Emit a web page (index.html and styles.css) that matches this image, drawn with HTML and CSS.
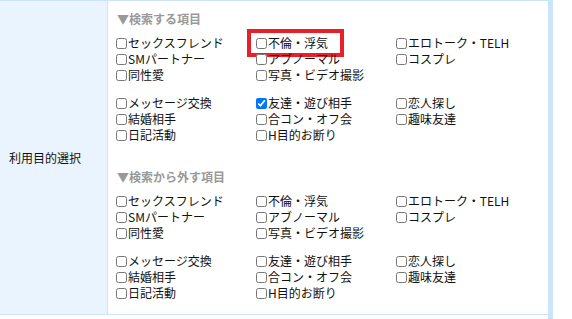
FILE: index.html
```html
<!DOCTYPE html>
<html lang="ja">
<head>
  <meta charset="UTF-8">
  <meta name="viewport" content="width=device-width, initial-scale=1.0">
  <title>利用目的選択</title>
  <link rel="stylesheet" href="styles.css">
</head>
<body>
  <div class="page">
    <table class="form-table">
      <tr>
        <th>利用目的選択</th>
        <td>
          <div class="section">
            <div class="section-title">▼検索する項目</div>
            <div class="check-grid">
              <label class="check"><input type="checkbox">セックスフレンド</label>
              <label class="check highlight"><input type="checkbox">不倫・浮気</label>
              <label class="check"><input type="checkbox">エロトーク・TELH</label>
              <label class="check"><input type="checkbox">SMパートナー</label>
              <label class="check"><input type="checkbox">アブノーマル</label>
              <label class="check"><input type="checkbox">コスプレ</label>
              <label class="check"><input type="checkbox">同性愛</label>
              <label class="check"><input type="checkbox">写真・ビデオ撮影</label>
            </div>
            <div class="check-grid">
              <label class="check"><input type="checkbox">メッセージ交換</label>
              <label class="check"><input type="checkbox" checked>友達・遊び相手</label>
              <label class="check"><input type="checkbox">恋人探し</label>
              <label class="check"><input type="checkbox">結婚相手</label>
              <label class="check"><input type="checkbox">合コン・オフ会</label>
              <label class="check"><input type="checkbox">趣味友達</label>
              <label class="check"><input type="checkbox">日記活動</label>
              <label class="check"><input type="checkbox">H目的お断り</label>
            </div>
          </div>

          <div class="section">
            <div class="section-title">▼検索から外す項目</div>
            <div class="check-grid">
              <label class="check"><input type="checkbox">セックスフレンド</label>
              <label class="check"><input type="checkbox">不倫・浮気</label>
              <label class="check"><input type="checkbox">エロトーク・TELH</label>
              <label class="check"><input type="checkbox">SMパートナー</label>
              <label class="check"><input type="checkbox">アブノーマル</label>
              <label class="check"><input type="checkbox">コスプレ</label>
              <label class="check"><input type="checkbox">同性愛</label>
              <label class="check"><input type="checkbox">写真・ビデオ撮影</label>
            </div>
            <div class="check-grid">
              <label class="check"><input type="checkbox">メッセージ交換</label>
              <label class="check"><input type="checkbox">友達・遊び相手</label>
              <label class="check"><input type="checkbox">恋人探し</label>
              <label class="check"><input type="checkbox">結婚相手</label>
              <label class="check"><input type="checkbox">合コン・オフ会</label>
              <label class="check"><input type="checkbox">趣味友達</label>
              <label class="check"><input type="checkbox">日記活動</label>
              <label class="check"><input type="checkbox">H目的お断り</label>
            </div>
          </div>
        </td>
      </tr>
    </table>
    <div class="side-bar"></div>
  </div>
</body>
</html>
```

FILE: styles.css
```css
body {
  margin: 0;
  padding: 0;
  font-family: "Noto Sans CJK JP", "Noto Sans", sans-serif;
  font-size: 12px;
  color: #111;
  background-color: #fff;
}

.page {
  display: flex;
  align-items: stretch;
  height: 319px;
  overflow: hidden;
}

.form-table {
  width: 548px;
  border-collapse: collapse;
  align-self: flex-start;
}

.form-table th,
.form-table td {
  border-top: 1px solid #cce3fa;
  border-bottom: 1px solid #cce3fa;
}

.form-table th {
  width: 98px;
  padding: 0 0 0 9px;
  background-color: #eaf4fe;
  border-right: 1px solid #cce3fa;
  font-weight: normal;
  text-align: left;
  vertical-align: middle;
}

.form-table td {
  padding: 10px 0 13px 8px;
}

.side-bar {
  width: 5px;
  background-color: #cbe3fb;
}

.section + .section {
  margin-top: 26px;
}

.section-title {
  height: 16px;
  line-height: 16px;
  padding-left: 1px;
  margin-bottom: 8px;
  color: #999;
  font-weight: bold;
}

.check-grid {
  display: grid;
  grid-template-columns: repeat(3, 140px);
  grid-auto-rows: 16px;
}

.check-grid + .check-grid {
  margin-top: 12px;
}

.check {
  position: relative;
  display: flex;
  align-items: center;
  white-space: nowrap;
  line-height: 16px;
}

.check input {
  width: 11px;
  height: 11px;
  margin: 1px 1px 0 0;
}

.highlight::after {
  content: "";
  position: absolute;
  left: -9px;
  top: -6px;
  width: 89px;
  height: 20px;
  border: 4px solid #e8202a;
}
```
